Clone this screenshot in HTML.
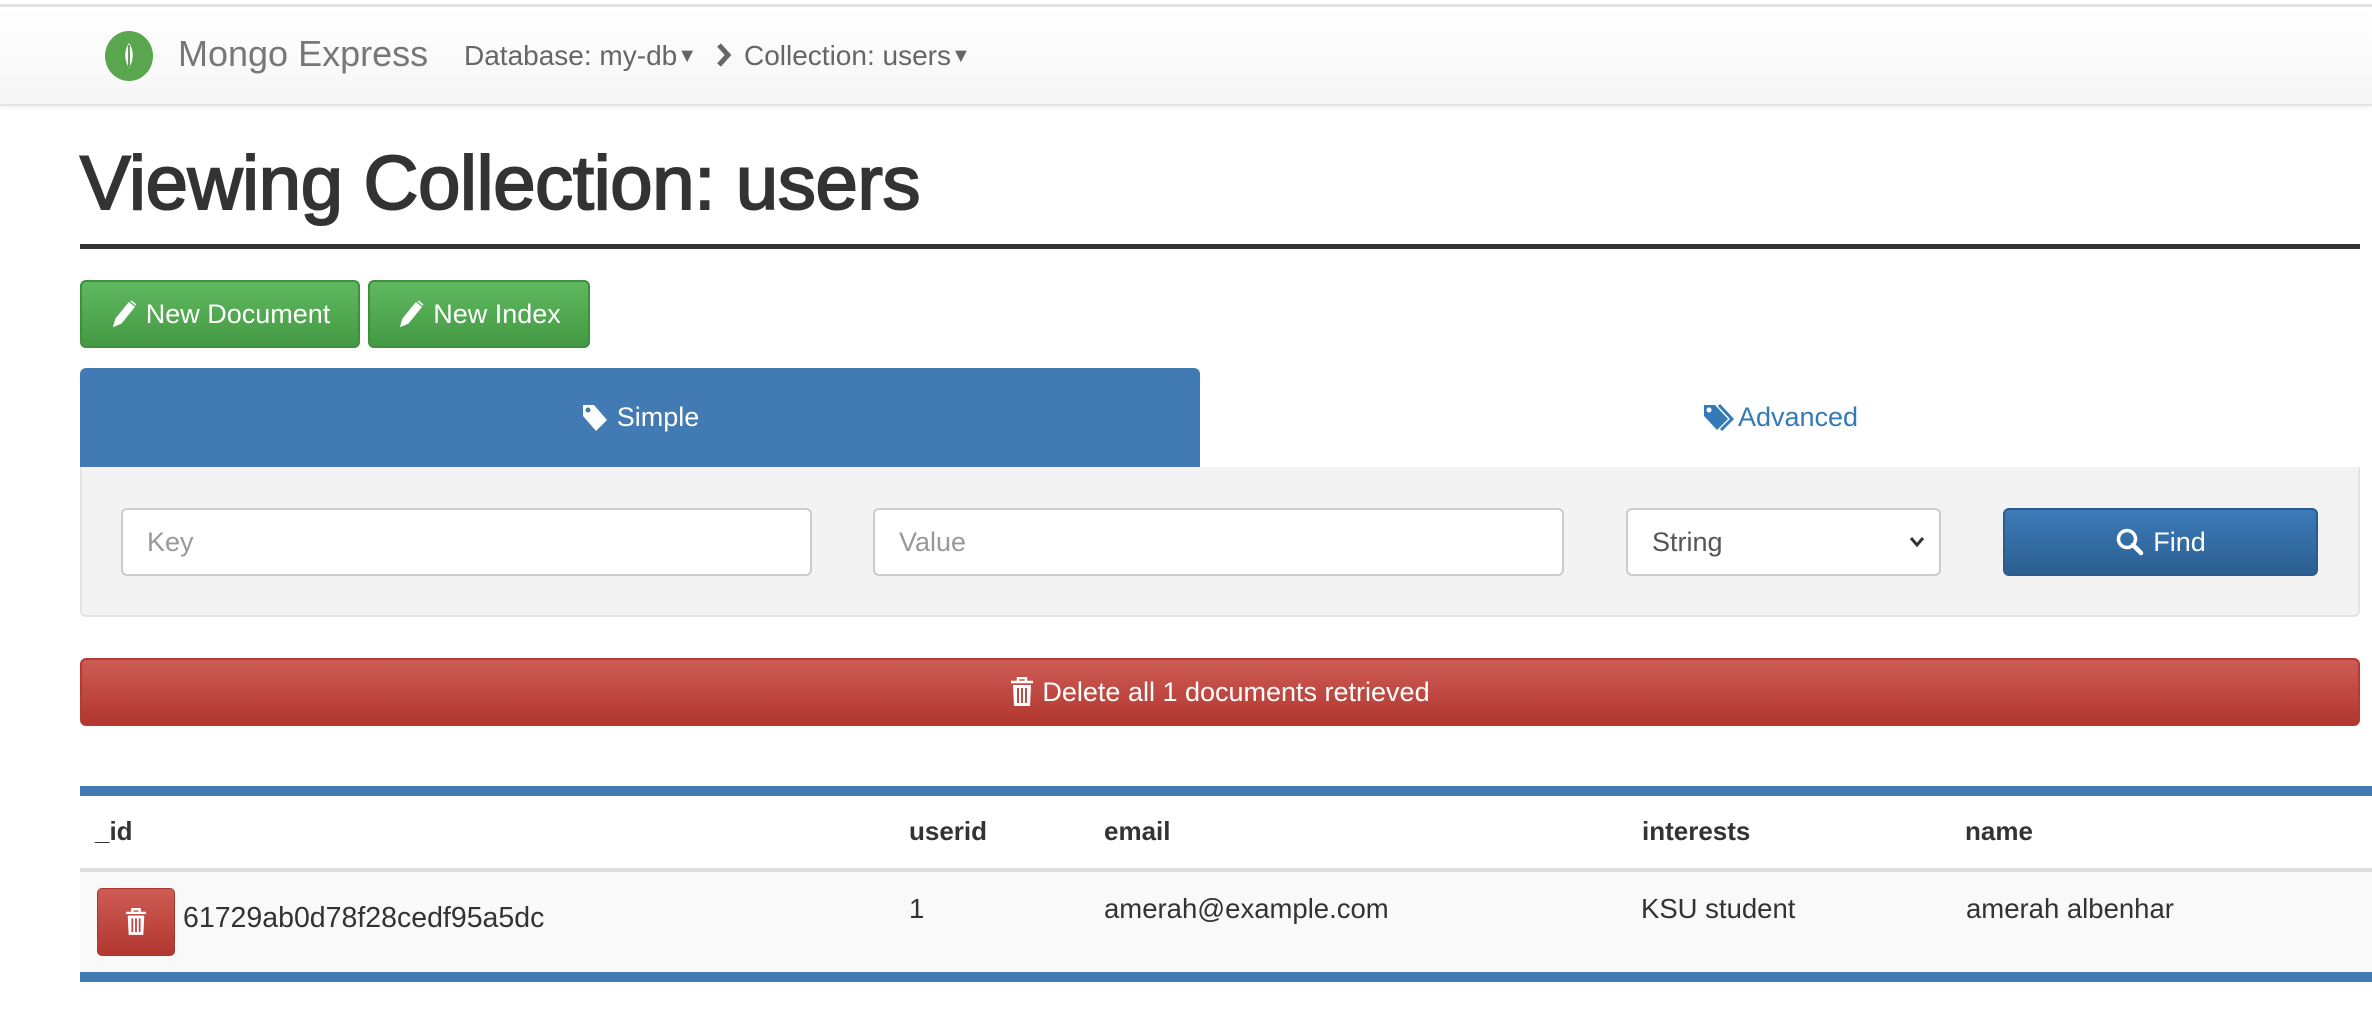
<!DOCTYPE html>
<html><head><meta charset="utf-8"><style>
*{box-sizing:border-box;margin:0;padding:0}
body{width:2372px;height:1014px;overflow:hidden;background:#fff;font-family:"Liberation Sans",Arial,sans-serif;color:#333;position:relative}
.abs{position:absolute}
.nav{left:0;top:4px;width:2372px;height:102px;background:linear-gradient(#fff,#f6f6f6);border-top:3px solid #e2e2e2;border-bottom:2px solid #e4e4e4;box-shadow:0 2px 4px rgba(0,0,0,.05)}
.btn-g{background:linear-gradient(#5fb85f,#449a44);border:2px solid #3e8f3e;border-radius:6px;color:#fff;font-size:27px;display:flex;align-items:center;justify-content:center;gap:8px}
.inp{background:#fff;border:2px solid #ccc;border-radius:6px;font-size:27px;color:#999;display:flex;align-items:center;padding-left:24px}
</style></head><body>
<div class="abs nav"></div>
<svg class="abs" style="left:105px;top:31px" width="48" height="50" viewBox="0 0 48 50"><ellipse cx="24" cy="25" rx="24" ry="25" fill="#5aa64f"/><path d="M24 12 C19 19 19 29 24 37 C29 29 29 19 24 12Z" fill="#fff"/><path d="M24 14 L24 36" stroke="#5aa64f" stroke-width="2"/></svg>
<div class="abs" style="left:178px;top:33px;font-size:36px;color:#777">Mongo Express</div>
<div class="abs" style="left:464px;top:40px;font-size:28px;color:#666">Database: my-db<span style="font-size:20px;vertical-align:3px">&#9660;</span></div>
<svg class="abs" style="left:716px;top:42px" width="16" height="26" viewBox="0 0 16 26"><path d="M3 3 L12 13 L3 23" stroke="#666" stroke-width="5" fill="none"/></svg>
<div class="abs" style="left:744px;top:40px;font-size:28px;color:#666">Collection: users<span style="font-size:20px;vertical-align:3px">&#9660;</span></div>

<div class="abs" style="left:80px;top:140px;font-size:76px;color:#333;-webkit-text-stroke:2px #333;letter-spacing:-0.3px">Viewing Collection: users</div>
<div class="abs" style="left:80px;top:244px;width:2280px;height:5px;background:#333"></div>

<div class="abs btn-g" style="left:80px;top:280px;width:280px;height:68px"><svg width="28" height="30" viewBox="0 0 28 30"><path d="M4 27 L6 20 L19 4 L24 8 L11 24Z M21 2 L26 6" fill="#fff" stroke="#fff" stroke-width="1.5"/></svg>New Document</div>
<div class="abs btn-g" style="left:368px;top:280px;width:222px;height:68px"><svg width="28" height="30" viewBox="0 0 28 30"><path d="M4 27 L6 20 L19 4 L24 8 L11 24Z M21 2 L26 6" fill="#fff" stroke="#fff" stroke-width="1.5"/></svg>New Index</div>

<div class="abs" style="left:80px;top:368px;width:1120px;height:99px;background:#427ab3;border-radius:6px 6px 0 0;color:#fff;font-size:27px;display:flex;align-items:center;justify-content:center;gap:8px"><svg width="28" height="30" viewBox="0 0 28 30"><path d="M2 2 L13 2 L26 17 L15 28 L2 13Z" fill="#fff"/><circle cx="7" cy="7" r="2.5" fill="#427ab3"/></svg>Simple</div>
<div class="abs" style="left:1200px;top:368px;width:1160px;height:99px;color:#337ab7;font-size:27px;display:flex;align-items:center;justify-content:center"><svg width="36" height="30" viewBox="0 0 36 30"><path d="M2 2 L13 2 L26 16 L15 27 L2 13Z" fill="#337ab7"/><path d="M17 2 L30 16 L19 27" stroke="#337ab7" stroke-width="3" fill="none"/><circle cx="7" cy="7" r="2.5" fill="#fff"/></svg>Advanced</div>

<div class="abs" style="left:80px;top:467px;width:2280px;height:150px;background:#f3f3f3;border:2px solid #e3e3e3;border-top:none;border-radius:0 0 6px 6px"></div>
<div class="abs inp" style="left:121px;top:508px;width:691px;height:68px">Key</div>
<div class="abs inp" style="left:873px;top:508px;width:691px;height:68px">Value</div>
<div class="abs inp" style="left:1626px;top:508px;width:315px;height:68px;color:#555;justify-content:space-between;padding-right:14px">String<svg width="16" height="12" viewBox="0 0 16 12"><path d="M2 2 L8 9 L14 2" stroke="#333" stroke-width="3" fill="none"/></svg></div>
<div class="abs" style="left:2003px;top:508px;width:315px;height:68px;background:linear-gradient(#3d7ab8,#2b5f91);border:2px solid #2a5d8e;border-radius:6px;color:#fff;font-size:27px;display:flex;align-items:center;justify-content:center;gap:8px"><svg width="30" height="30" viewBox="0 0 30 30"><circle cx="12" cy="12" r="8.5" stroke="#fff" stroke-width="3.5" fill="none"/><path d="M18 18 L26 26" stroke="#fff" stroke-width="4.5" stroke-linecap="round"/></svg>Find</div>

<div class="abs" style="left:80px;top:658px;width:2280px;height:68px;background:linear-gradient(#cd5c55,#b2372f);border:2px solid #b53a32;border-radius:6px;color:#fff;font-size:27px;display:flex;align-items:center;justify-content:center;gap:8px"><svg width="24" height="30" viewBox="0 0 24 30"><path d="M8 4 L8 1 L16 1 L16 4 M1 5 L23 5" stroke="#fff" stroke-width="2.5" fill="none"/><path d="M3 8 L21 8 L20 29 L4 29Z" fill="#fff"/><path d="M8 11 L8 26 M12 11 L12 26 M16 11 L16 26" stroke="#bf4a42" stroke-width="2"/></svg>Delete all 1 documents retrieved</div>

<div class="abs" style="left:80px;top:786px;width:2292px;height:10px;background:#427ab3"></div>
<div class="abs" style="left:80px;top:868px;width:2292px;height:4px;background:#ddd"></div>
<div class="abs" style="left:80px;top:872px;width:2292px;height:100px;background:#f9f9f9"></div>
<div class="abs" style="left:80px;top:972px;width:2292px;height:10px;background:#427ab3"></div>
<div class="abs" style="top:816px;left:0;font-size:26px;font-weight:bold">
<span class="abs" style="left:95px">_id</span><span class="abs" style="left:909px">userid</span><span class="abs" style="left:1104px">email</span><span class="abs" style="left:1642px">interests</span><span class="abs" style="left:1965px">name</span></div>
<div class="abs" style="left:97px;top:888px;width:78px;height:68px;background:linear-gradient(#cd5c55,#b2372f);border:1px solid #a8342c;border-radius:5px;display:flex;align-items:center;justify-content:center"><svg width="22" height="30" viewBox="0 0 24 30"><path d="M8 4 L8 1 L16 1 L16 4 M1 5 L23 5" stroke="#fff" stroke-width="2.5" fill="none"/><path d="M3 8 L21 8 L20 29 L4 29Z" fill="#fff"/><path d="M8 11 L8 26 M12 11 L12 26 M16 11 L16 26" stroke="#bf4a42" stroke-width="2"/></svg></div>
<div class="abs" style="left:183px;top:902px;font-size:28.5px">61729ab0d78f28cedf95a5dc</div>
<div class="abs" style="top:893px;left:0;font-size:27.5px">
<span class="abs" style="left:909px">1</span><span class="abs" style="left:1104px;white-space:nowrap">amerah@example.com</span><span class="abs" style="left:1641px;white-space:nowrap">KSU student</span><span class="abs" style="left:1966px;white-space:nowrap">amerah albenhar</span></div>
</body></html>
